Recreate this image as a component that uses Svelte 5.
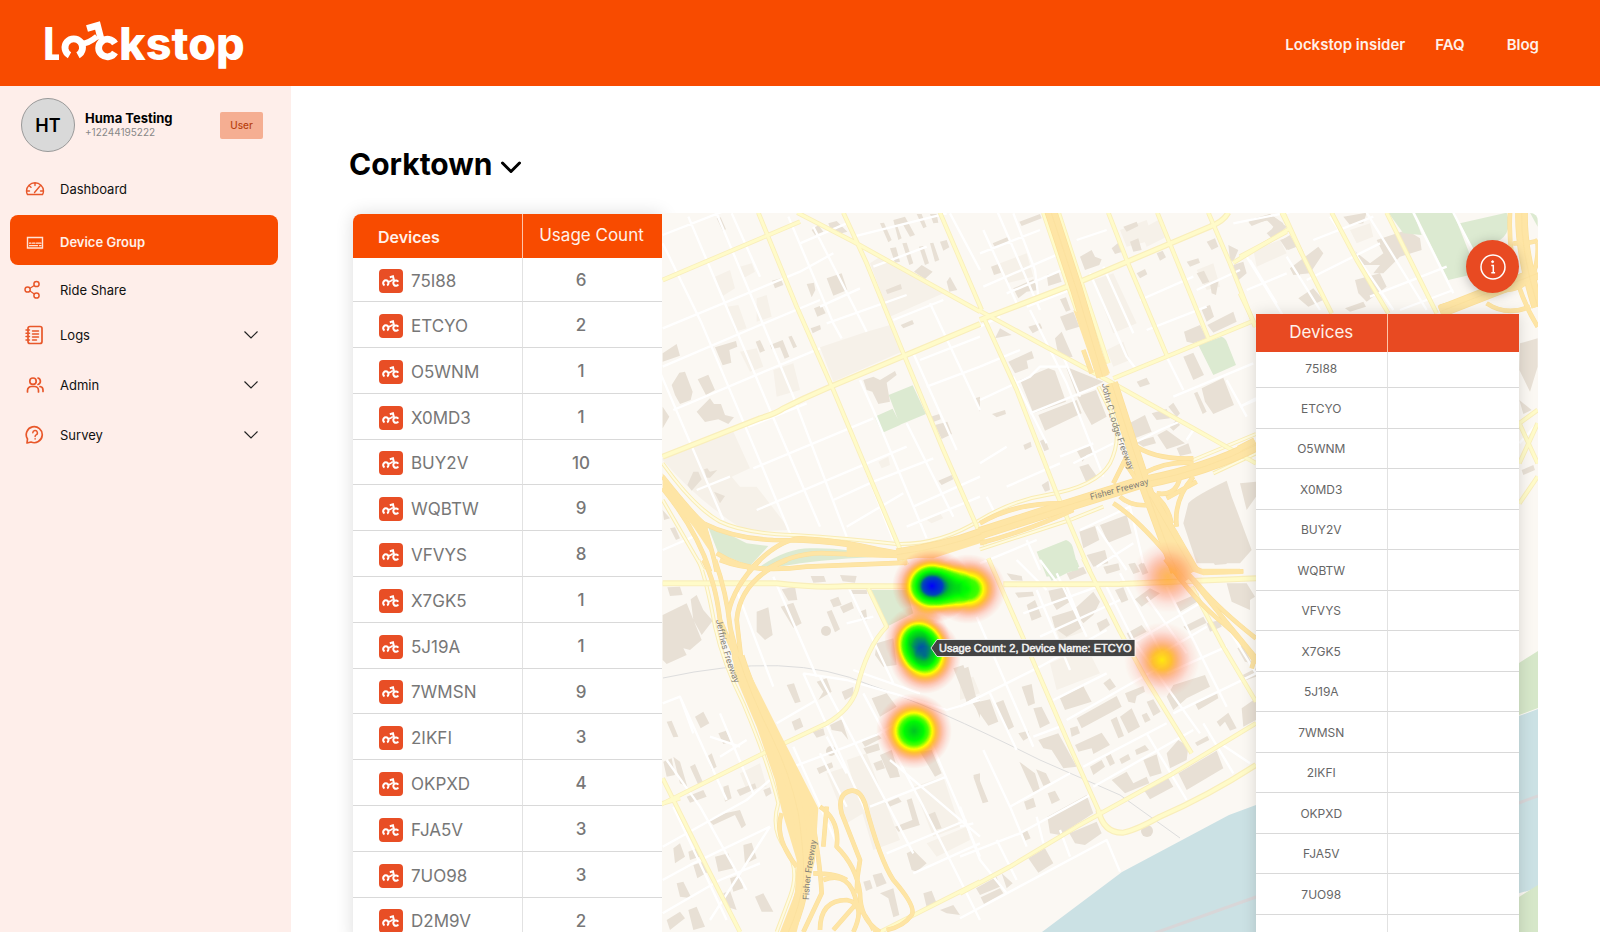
<script>
  const devices = [
    ['75I88', 6], ['ETCYO', 2], ['O5WNM', 1], ['X0MD3', 1], ['BUY2V', 10],
    ['WQBTW', 9], ['VFVYS', 8], ['X7GK5', 1], ['5J19A', 1], ['7WMSN', 9],
    ['2IKFI', 3], ['OKPXD', 4], ['FJA5V', 3], ['7UO98', 3], ['D2M9V', 2]
  ];
  const panelDevices = devices.slice(0, 14).map((d) => d[0]);

  const menu = [
    { label: 'Dashboard', icon: 'gauge' },
    { label: 'Device Group', icon: 'card', active: true },
    { label: 'Ride Share', icon: 'share', short: true },
    { label: 'Logs', icon: 'book', more: true },
    { label: 'Admin', icon: 'people', more: true },
    { label: 'Survey', icon: 'question', more: true }
  ];

  // Map tiles: each holds its own origin and is drawn at one third scale.
  const tiles = [
    {
      x: 660, y: 210,
      zone: 'M630 160L660 140L850 250L690 320ZM480 412L620 365L690 345L725 425L520 515ZM8 745L220 665L270 775L215 800L240 830L290 830L390 960L260 965Q120 880 8 750ZM165 200L210 180L225 235L185 260ZM200 290L235 285L260 355L225 365ZM290 265L320 255L335 320L290 335ZM240 170L275 160L285 185L250 205ZM240 425L290 415L310 470L270 485ZM340 480L400 460L420 540L350 560ZM800 930L840 910L850 925L815 940ZM655 755L685 740L690 765L665 775Z',
      green: 'M140 940L260 1000L325 1008L270 1068L175 1030ZM300 1070Q380 1015 450 1015Q560 1012 650 1040Q460 1050 370 1068ZM686 555L758 526L798 612L720 644ZM644 620L698 596L722 644L666 669Z',
      build: 'M170 25L182 22L198 58L188 62ZM455 60L475 45L490 65L465 75ZM505 40L530 33L562 65L545 70L510 55ZM500 205L545 190L562 240L520 257ZM440 222L462 218L466 240L455 262ZM336 212L362 205L370 225L345 235ZM462 295L485 286L497 310L472 320ZM452 355L480 345L483 358L458 370ZM677 240L722 222L726 237L682 252ZM722 345L757 330L762 342L730 355ZM165 412L228 393L232 410L208 420L214 458L188 466ZM287 395L300 390L315 422L300 428ZM330 405L368 390L388 440L374 446L360 412L335 418ZM385 380L395 377L411 410L400 415ZM8 430L50 402L60 437L8 455ZM35 525L58 488L75 485L98 545L92 570L60 582L45 555ZM113 508L145 494L165 540L138 555ZM110 605L150 565L162 582L183 582L195 615L222 622L205 642L175 628L135 636ZM610 510L640 500L660 510L705 483L710 495L680 518L690 575L655 582L637 545L620 540ZM660 40L672 38L695 90L685 97ZM700 30L735 20L765 75L750 80L728 42L712 48L725 85L715 90ZM770 12L785 12L800 50L790 55ZM810 12L830 12L835 38L820 40ZM690 115L708 112L720 155L705 158ZM727 100L740 98L760 160L748 165ZM777 110L790 108L807 160L795 165ZM810 100L820 98L838 150L825 155ZM840 95L860 90L868 112L850 122ZM762 185L785 165L818 185L795 207ZM860 215L870 200L892 240L868 245ZM825 645L862 635L876 672L845 687ZM812 620L838 612L842 628L820 636ZM835 812L875 795L880 808L845 825ZM945 565L960 560L960 605ZM82 825L100 785L115 785L125 808L95 842ZM132 778L142 775L150 785L172 780L150 803L140 803ZM162 845L195 858L180 880ZM30 955L45 952L60 985L48 990ZM8 900L30 925L12 930ZM8 590L28 620L8 655Z',
      minor: 'M-20 440L190 930M8 100L125 340L290 730L390 970M85 20L330 600L480 950M170 10L400 560L560 980M215 10L300 200M385 20L520 340L545 385M460 50L620 365M600 510L640 600L800 985M530 560L700 990M740 640L880 920M810 280L960 600M760 430L890 720M870 10L960 180M8 75L200 0M8 355L420 185L520 130M8 470L300 345L480 270M40 600L300 490L480 415M265 650L440 580M280 775L640 625M290 900L740 710M110 840L210 800M420 100L560 40M480 290L600 235M500 340L740 255M700 330L850 270M520 870L640 815L820 745M560 950L730 850M740 950L960 860M760 890L960 800M780 450L960 380M800 530L960 470M8 1020L100 980M580 80L860 10M640 170L800 110',
      major: 'M8 210L420 35M412 8L580 95L960 305M295 8L410 290L520 540L740 1065M550 8L620 160L730 430L850 720L975 1005M840 8L965 300',
      avenue: 'M8 740L300 625Q350 610 370 595Q430 565 500 535L960 342',
      edge: 'M8 760Q100 890 180 935Q250 970 400 975Q560 985 710 1002Q840 1005 960 930M8 870Q60 960 130 1080',
      hwy: 'M8 800Q100 915 130 940Q220 985 340 990Q520 990 720 1030M130 940Q160 1030 170 1085M8 835Q110 960 150 1085M170 1030Q240 1075 330 1078M265 1085Q350 990 420 985Q560 990 720 1035M310 1085Q400 1025 500 1030L720 1038',
      wide: 'M710 1034Q850 1015 965 972',
      mass: 'M8 790L70 880L140 940L160 1040L100 950L8 840ZM560 1005L720 1025L860 1005L960 960L960 1000L820 1045L560 1040Z'
    },
    {
      x: 980, y: 210,
      zone: 'M60 160L140 130L160 200L80 220ZM420 60L500 30L520 90L440 110ZM340 210L400 190L470 340L400 370ZM650 180L700 160L720 230L680 240ZM820 120L900 90L920 130L830 170ZM380 420L430 395L450 450L400 470ZM480 60L535 30L560 80L500 110Z',
      green: 'M655 405L725 380Q738 385 742 400L768 465L700 495ZM170 1025L258 990Q272 995 278 1010L296 1080L200 1100Z',
      build: 'M38 100L85 80L90 92L45 112ZM33 170L55 162L63 188L42 195ZM118 35L180 12L185 25L125 48ZM100 235L160 208L175 240L140 245L115 265ZM200 195L235 185L245 215L205 228ZM240 268L258 262L272 300L258 305ZM145 350L180 340L187 355L158 370ZM240 320L280 305L298 350L258 362ZM45 385L60 355L95 375ZM85 455L155 423L162 445L140 452L145 475L105 490ZM120 510L205 475L225 482L258 575L160 610ZM175 615L290 570L305 610L195 662ZM225 385L245 365L278 440L262 443L232 420ZM258 470L370 515L290 555ZM292 560L348 540L380 620L335 645L310 600ZM300 140L335 120L345 140L365 148L358 165L315 180ZM395 115L415 98L428 125L405 132ZM430 50L470 35L475 48L440 65ZM450 95L475 85L485 120L460 125ZM470 190L495 177L502 193L480 205ZM530 130L548 122L558 142L540 152ZM620 155L655 145L660 158L630 170ZM650 190L672 182L688 215L668 222ZM690 220L715 215L708 255L695 250ZM663 295L690 285L702 320L680 335ZM612 365L660 345L680 385L640 400L620 395ZM682 345L760 305L770 335L700 368ZM680 95L705 85L715 110L695 120ZM610 440L640 428L672 495L640 510ZM665 535L730 503L762 585L700 612L675 575ZM642 550L652 545L680 605L668 612ZM470 515L500 503L510 522L480 532ZM448 640L495 615L515 665L465 685ZM515 610L560 597L570 625L530 630ZM532 675L560 660L615 700L560 718ZM565 590L580 578L600 610L590 622ZM568 650L590 630L600 645L580 662ZM590 715L625 700L635 730L600 738ZM467 695L520 680L528 700L490 710ZM288 718L332 705L340 730L320 735L308 755ZM298 770L325 762L350 798L318 815ZM36 612L75 600L78 612L50 622ZM130 705L152 695L155 710L135 720ZM180 693L195 686L207 718L193 724ZM185 825L205 812L210 840L195 845ZM625 880Q640 860 740 812L755 860L815 1020L780 1060L650 1060L610 940ZM298 965L345 948L358 990L310 1015ZM360 945L440 915L455 970L385 998ZM320 1035L375 1020L385 1060L340 1070ZM805 30L870 12L920 50L880 90L860 70L885 50L870 30L810 42ZM745 105L775 120L760 155L750 150ZM760 165L790 155L800 190L770 215ZM900 90L930 80L940 110L920 120ZM930 175L960 160L960 200L940 190Z',
      minor: 'M10 60L110 280M50 0L180 300M100 10L165 180L175 260M330 190L440 440L470 480M370 170L460 370M150 300L260 520L370 800M100 500L200 700M250 440L300 560M60 320L0 350M0 570L150 500L180 470L260 470M150 610L350 530M0 760L80 710M80 830L240 760M280 760L400 700M80 250L270 170M290 90L380 60M560 440L610 540M470 480L540 450M580 560L820 460M650 240L780 180M480 270L640 200M500 360L680 290M740 510L800 620M780 590L828 570M460 700L540 660L610 630M620 690L640 660M800 140L960 400M0 130L180 60M10 230L240 130M350 950L440 1080M140 990L180 1080M300 960L450 890L490 1060M0 1060L170 990M350 1070L460 1000M20 860L50 920M240 740L340 700M760 40L960 0M140 290L270 240M0 470L120 420',
      major: 'M190 8L260 215L360 500M236 8L300 205L385 460M385 8L440 150L562 440M532 8L685 385M685 8L750 160L825 350M760 158L925 58M905 8L965 130M-5 300L390 515L828 760M10 320L110 540L230 850L330 1085M400 505L560 440L815 335',
      avenue: 'M0 330L300 215L690 50Q730 35 745 8',
      edge: 'M0 930Q100 870 200 855Q350 830 390 760Q425 690 400 620L355 530M640 750L828 672M0 1018L270 930L370 890M700 790L828 730',
      hwy: 'M455 700Q520 750 640 745M400 530L460 690M490 790Q570 750 640 760M530 850Q590 860 600 800M500 840Q560 870 575 940M640 800Q580 870 590 950M400 880Q480 930 600 1080M400 820L440 740M430 750L470 810M0 940Q100 880 240 880M0 1000Q150 960 280 900M420 860Q450 890 510 885M310 420L335 490M560 865L650 815',
      wide: 'M211 0L290 240L368 500M0 970L250 890L500 812M395 520L460 720L500 840L590 1085M500 815Q680 780 828 705M510 860L640 1085',
      mass: 'M540 930L590 960L655 1085L570 1085ZM280 300L330 330L390 490L350 500Z'
    },
    {
      x: 1240, y: 210,
      zone: 'M330 60L390 40L400 80L350 100Z',
      green: 'M445 8L520 8L545 75L490 70ZM525 8L640 8L712 190L625 210ZM660 40L800 8Q820 60 780 90L700 120ZM870 8L893 8L893 50Z',
      build: 'M25 35L90 12L130 40L110 80L85 75L100 50L80 30L35 48ZM125 90L150 75L170 110L145 120ZM150 175L235 110L250 130L210 190L160 195ZM310 20L380 8L370 40L330 45ZM340 120L390 160L430 130L410 90L500 60L540 85L545 120L480 140L430 190L400 190L420 165L360 165ZM345 210L420 190L440 230L380 275L355 250ZM315 295L370 275L378 290L330 305ZM175 265L220 235L250 270L205 290ZM840 400L893 385L893 470L870 545L838 480ZM838 570L875 600L850 612ZM845 780L880 765L885 780L850 795ZM0 820L48 815L48 860L20 900Z',
      minor: 'M140 140L240 300M30 150L110 280M270 20L460 300M380 8L560 300M520 8L640 250M640 8L740 200M20 240L140 190M200 210L420 100M390 260L620 170M220 90L400 20M480 300L640 240M838 700L893 640M0 590L48 565',
      major: 'M130 8L185 130L275 310M275 8L350 150L445 310M440 8L590 310M0 140L140 65M0 250L48 350M838 640L893 600M838 760L893 640M838 640L893 760M838 880L893 800',
      avenue: '', edge: '',
      hwy: 'M810 8Q800 200 893 350M820 100Q880 100 893 90M600 290Q700 260 800 240Q900 230 893 100M740 280Q800 320 870 290',
      wide: 'M845 0Q840 120 893 290M600 305Q740 250 893 190M0 725L48 700',
      mass: ''
    },
    {
      x: 660, y: 560,
      zone: 'M560 600L620 580L720 840L640 870ZM760 680L850 650L900 800L820 830ZM800 850L920 800L930 840L830 890ZM240 640L300 610L320 680L260 690ZM500 640L560 620L610 760L560 790Z',
      green: 'M630 90L740 90L760 160L680 200Z',
      build: 'M22 82L60 80L68 105L30 108ZM92 118L110 105L130 150L158 182L125 225L100 180ZM8 165L80 130L125 240L90 270L70 265L80 285L20 312L8 300ZM290 155L325 142L338 225L315 240L290 215ZM365 88L405 80L412 120L385 122ZM362 140L400 128L425 190L400 203ZM452 48L492 48L498 65L460 68ZM540 45L590 48L585 68L548 64ZM500 155L515 150L540 208L525 217ZM570 90L620 90L622 102L572 102ZM510 120L535 110L545 135L520 142ZM540 140L575 125L582 145L550 160ZM598 155L618 148L622 180L605 182ZM380 375L402 370L422 425L405 430ZM105 470L130 455L148 490L122 505ZM470 365L500 355L515 395L475 420L490 395ZM395 485L420 473L430 500L405 512ZM175 520L198 512L212 545L190 552ZM510 495L545 478L565 540L545 515L515 510ZM545 395L580 380L580 405L555 420ZM635 415L680 400L710 440L660 470ZM650 250L700 235L710 315L670 320L645 285ZM605 545L650 520L665 535L615 560ZM610 565L655 550L660 570L620 582ZM660 585L695 570L720 650L690 655ZM470 625L515 607L520 622L478 642ZM458 515L490 505L495 525L470 533ZM20 485L35 482L55 530L40 532ZM10 605L35 595L45 645L20 650ZM40 590L60 605L82 680L60 670ZM90 620L105 612L130 670L115 675ZM140 590L155 580L170 620L155 630ZM190 680L205 675L215 715L195 725ZM230 690L285 670L290 685L240 708ZM310 690L330 682L335 700L318 710ZM80 710L130 690L140 710L90 728ZM145 780L195 760L240 750L258 795L245 805L225 765L160 795ZM40 865L60 850L75 890L45 910ZM85 875L110 865L118 890L90 900ZM100 915L130 905L145 935L112 955ZM165 890L205 880L220 925L175 935ZM210 955L240 945L250 985L220 995ZM250 855L275 848L290 895L255 912ZM50 970L70 965L95 1015L60 1010ZM190 1000L210 992L230 1050L200 1040ZM285 1010L310 1000L340 1055L305 1055ZM85 1050L110 1040L135 1100L100 1110ZM20 1080L60 1055L75 1075L30 1110ZM675 730L715 712L725 725L685 742ZM740 720L755 715L778 790L760 790ZM705 800L770 775L780 795L715 815ZM802 765L825 755L845 805L825 810ZM740 880L760 870L800 910L770 935L755 930ZM610 965L630 960L638 985L618 993ZM638 945L665 938L680 970L650 982ZM660 1000L700 985L718 1065L700 1072L685 1015ZM790 1000L815 992L830 1030L800 1042ZM840 1050L880 1035L900 1065L860 1060ZM880 325L910 315L945 410L920 425ZM940 425L960 415L960 475ZM780 575L815 570L845 640L825 650ZM640 610L665 600L675 625L650 632ZM940 645L960 640L960 700Z',
      minor: 'M230 90L340 380M340 50L470 350M430 340L620 760M560 70L700 370M480 350L760 880M610 400L790 740L960 1080M8 430L60 410L200 720M180 460L280 700M60 410L100 520M350 490L470 420M8 960L100 910L330 800M8 860L260 720L330 660M20 600L120 740L260 990M40 740L200 1080M8 1060L180 960L300 910M430 340L560 360L700 400L860 450M580 330L780 400M560 190L640 170M400 620L560 560L660 520L760 460M480 580L560 740M500 530L560 640M630 740L860 650M680 880L920 780M760 940L960 850M690 600L960 830M860 450L960 420M150 530L240 560M180 590L260 540M330 800L150 1080M400 560L530 850M780 470L960 890',
      major: 'M-10 740L320 575L500 490Q570 450 590 390Q620 260 680 200L625 85M8 655L140 920L240 1116M-10 735L60 715M660 1116L960 965',
      avenue: 'M8 70L350 70Q480 85 560 78L960 80',
      edge: 'M115 0Q140 60 165 200Q190 310 250 430Q330 620 355 730Q330 810 380 870Q420 930 390 1010L350 1116',
      hwy: 'M130 0Q165 60 180 180L240 320M165 0Q200 100 210 200L240 320M300 0Q220 80 205 160L225 300M380 0Q240 60 230 180L245 310M180 0Q280 40 440 20L740 8M450 740Q480 900 485 1000L430 1116M480 740Q540 780 530 860Q590 920 600 1000Q600 1080 660 1116M365 760Q340 830 410 920M490 960Q570 930 590 1030Q650 1116 640 1116M480 1110Q480 1020 560 1020Q620 1030 580 1116M590 1000Q590 950 600 900L545 760Q530 700 575 692Q600 690 615 730Q660 900 700 960Q770 1040 755 1065Q730 1100 680 1110M460 940Q530 940 560 960M500 740L490 860M520 1110L590 1030',
      wide: 'M235 290Q270 400 335 530Q390 640 415 760Q435 900 430 960Q420 1040 385 1116',
      mass: 'M218 250L250 300L360 520L475 745L465 900L440 1000L410 1116L360 1116L405 1000L410 900L365 750L345 660L290 500L222 340Z'
    },
    {
      x: 960, y: 560,
      zone: 'M270 310L380 260L420 340L290 390ZM280 190L350 165L370 215L300 240ZM0 360L40 350L60 400L0 420Z',
      green: 'M240 0L350 0L358 20L275 62Z',
      build: 'M165 98L218 95L222 108L175 113ZM200 135L225 120L245 170L215 182ZM265 92L315 82L330 125L290 150L275 125ZM340 150L400 95L420 125L400 165L370 190ZM275 170L340 150L370 200L320 230L285 205ZM465 90L490 82L505 120L485 128ZM525 118L570 85L600 100L545 140ZM500 220L545 195L560 215L510 240ZM410 190L440 175L450 195L420 215ZM645 130L715 100L720 120L660 155ZM670 200L730 170L740 188L685 215ZM740 190L780 180L785 200L750 215ZM800 70L860 70L885 110L870 120L870 150L815 125ZM832 265L850 255L875 310L855 305ZM848 345L888 325L888 350L860 360ZM705 430L770 395L775 415L715 450ZM640 375L735 345L750 380L680 415L640 450L620 410ZM770 485L805 458L830 505L810 512L795 485L780 500ZM845 445L888 415L888 480L850 500ZM300 415L370 378L395 425L315 450ZM350 475L470 408L485 440L365 505ZM430 370L450 355L468 380L448 392ZM495 400L550 378L555 395L530 408L525 430L505 425ZM560 425L580 418L602 455L580 468ZM480 470L515 445L540 500L505 520ZM452 480L470 470L492 528L475 535ZM345 555L425 518L450 555L400 582L395 565L355 575ZM330 505L352 498L360 520L335 530ZM185 380L215 372L225 430L205 438ZM220 445L245 440L270 490L240 505ZM235 540L295 520L350 620L310 625L275 570L250 565ZM105 430L130 420L162 500L140 512ZM38 430L90 418L115 485L85 497ZM175 520L205 512L210 530L190 542ZM0 330L25 320L48 410L20 425ZM525 570L555 555L567 570L530 585ZM545 465L560 458L572 480L555 488ZM390 620L425 600L435 620L400 645ZM437 590L452 582L465 610L450 618ZM478 597L505 582L512 598L485 612ZM620 580L655 540L685 560L680 600L630 625ZM550 600L590 583L605 640L570 650ZM705 548L742 528L748 540L712 558ZM455 660L500 635L520 670L560 650L568 670L495 700ZM553 692L625 655L640 680L570 718ZM655 640L770 572L790 625L680 690ZM178 605L225 640L240 690L220 697L200 655ZM228 628L258 640L272 668L250 678ZM263 700L285 692L300 720L275 732ZM192 725L220 713L228 740L200 750ZM40 650L52 643L85 725L68 730ZM262 770L380 705L400 760L300 825L270 820ZM328 820L410 785L425 820L375 855L345 850ZM185 815L200 808L212 835L195 842ZM205 895L255 865L280 910L235 938ZM62 1012L120 985L130 1000L72 1032ZM48 985L110 950L120 980L60 1005ZM125 940L158 970L140 985ZM140 40L185 48L188 62L155 60ZM320 40L370 20L380 40L330 60ZM430 20L475 10L480 30L440 42ZM505 12L525 8L540 35L520 42ZM535 15L550 5L565 38L548 45ZM755 0L800 0L800 12L765 15Z',
      minor: 'M230 90L330 330M290 40L380 230M190 160L440 70M240 230L480 120M0 440L240 320L440 210M50 170L220 560M90 400L170 570M320 80L360 180M560 110L680 280M620 80L800 440M440 80L520 240L720 520M480 40L620 310M500 260L720 130M570 300L740 200M620 340L800 260M280 420L440 340M320 480L620 310M220 530L300 500M370 620L620 490M400 680L700 510M560 520L680 720M730 490L820 640M640 460L888 340M150 740L330 640M70 570L150 740L200 860M0 890L180 820L400 700M0 1075L440 840L480 935M0 740L60 900L140 1000M110 840L170 960M230 770L250 850M300 810L330 890M780 550L870 610M170 0L260 90M740 100L888 340M0 800L40 790M240 0L300 80',
      major: 'M85 -5L190 235L330 560L415 750M370 -5L480 215L560 360L695 580M695 80L790 260L888 425M0 1000L150 920L350 800L640 640L888 490',
      avenue: 'M130 73L480 72L888 55M415 750Q430 820 490 818Q530 810 600 770Q740 710 888 615',
      edge: '',
      hwy: 'M620 0Q700 120 790 190Q840 230 888 310M645 0L720 80Q780 150 888 235M690 50Q760 140 885 290L875 325M690 0Q710 45 760 36L850 34',
      wide: 'M625 -10L680 60',
      mass: 'M700 35L720 26L840 26L845 42L730 46Z'
    }
  ];

  const water = 'M1042 932L1122 872L1229 815L1256 805L1290 795L1519 716L1538 709L1538 888L1380 932Z';
  const banks = 'M1519 663L1538 651L1538 708L1519 715ZM1519 897L1538 885L1538 932L1519 932Z';
  const rail = 'M663 678Q790 650 870 685Q930 705 1040 760L1120 795L1180 838';

  const heat = [
    { id: 'hot', x: 932, y: 586, rx: 40, ry: 37 },
    { id: 'side', x: 968, y: 589, rx: 38, ry: 35 },
    { id: 'side', x: 917, y: 639, rx: 33, ry: 33 },
    { id: 'warm', x: 925, y: 656, rx: 36, ry: 38 },
    { id: 'warm', x: 914, y: 731, rx: 38, ry: 38 },
    { id: 'mild', x: 1162, y: 660, rx: 38, ry: 38 },
    { id: 'faint', x: 1168, y: 577, rx: 36, ry: 36 }
  ];
</script>

{#snippet bike()}
  <g fill="none" stroke="currentColor" stroke-width="6.8">
    <path d="M8.500 22.300A8.800 8.800 0 1 1 17 22.300" />
    <path d="M54 19.500A8.800 8.800 0 1 1 54 10.500" />
    <path d="M20 10.500Q27 11 36 3.500" stroke-width="6" />
    <path d="M26 -4.500L36.500 -7.500L40 6" />
  </g>
{/snippet}

<div class="page">
  <header>
    <a class="logo" href="#home" aria-label="Lockstop">
      <svg width="204" height="52" viewBox="42 20 204 52">
        <clipPath id="stem"><rect x="40" y="20" width="18" height="45" /></clipPath>
        <text x="41" y="60" class="mark-l" clip-path="url(#stem)">L</text>
        <g transform="translate(60 33)" color="#fff">{@render bike()}</g>
        <text x="118" y="60" class="mark">kstop</text>
      </svg>
    </a>
    <nav class="top">
      <a href="#insider">Lockstop insider</a>
      <a href="#faq">FAQ</a>
      <a href="#blog">Blog</a>
    </nav>
  </header>

  <div class="body">
    <aside>
      <div class="profile">
        <div class="avatar">HT</div>
        <div class="who">
          <strong>Huma Testing</strong>
          <span>+12244195222</span>
        </div>
        <span class="role">User</span>
      </div>
      <nav class="menu">
        {#each menu as item}
          <a href="#{item.icon}" class:active={item.active} class:short={item.short}>
            <svg class="ico" width="20" height="20" viewBox="0 0 20 20" fill="none" stroke="currentColor" stroke-width="1.5" stroke-linecap="round" stroke-linejoin="round">
              {#if item.icon === 'gauge'}
                <path d="M2.500 15.500Q1.500 14 1.500 12A8.500 8.200 0 0 1 18.500 12Q18.500 14 17.500 15.500ZM10 4v2.500M4.500 7l1.500 1.200M2 12h2.500M15.500 12h2.500M15 7L9.500 13.500" stroke-width="1.400" />
              {:else if item.icon === 'card'}
                <path d="M2.500 5.500h15v10.500h-15z" stroke-width="1.400" stroke-linejoin="miter" />
                <path d="M4.500 13.700h8M14.500 13.700h1.500M4.500 11.200h1.500M7.500 11.200h2.500M11.500 11.200h4.500" stroke-width="1.200" />
              {:else if item.icon === 'share'}
                <circle cx="3.600" cy="9.500" r="2.600" /><circle cx="12.500" cy="4" r="2.600" /><circle cx="12.500" cy="15.500" r="2.600" />
                <path d="M6 8.200L10.300 5.400M6 10.900L10.300 14" stroke-width="1.200" />
              {:else if item.icon === 'book'}
                <rect x="3" y="1.500" width="14" height="17" rx="2" stroke-width="1.700" />
                <path d="M7.500 6h6M7.500 9h6M7.500 12h6M7.500 15h4M1 5h3.500M1 8.300h3.500M1 11.600h3.500M1 15h3.500" />
              {:else if item.icon === 'people'}
                <g stroke-width="1.700">
                  <circle cx="8" cy="6.200" r="3.200" />
                  <path d="M2.500 17v-1.500a4 4 0 0 1 4-4h3a4 4 0 0 1 4 4V17M13 3a3.400 3.400 0 0 1 0 6.500M15 11.500a3.500 3.500 0 0 1 3 3.500v1.500" />
                </g>
              {:else}
                <path d="M2 18l.5-4A8 8 0 1 1 6 17Z" stroke-width="1.700" />
                <path d="M7.800 7.800a2.300 2.300 0 1 1 3.300 2.100q-1 .5-1 1.600M10.100 13.800v.1" />
              {/if}
            </svg>
            <span>{item.label}</span>
            {#if item.more}
              <svg class="more" width="14" height="8" viewBox="0 0 14 8" fill="none" stroke="#222" stroke-width="1.200"><path d="M.5.500L7 7L13.500.500" /></svg>
            {/if}
          </a>
        {/each}
      </nav>
    </aside>

    <main>
      <button class="place">
        Corktown
        <svg width="22" height="14" viewBox="0 0 22 14" fill="none" stroke="#000" stroke-width="3" stroke-linecap="round" stroke-linejoin="round"><path d="M2.500 3L11 11.500L19.500 3" /></svg>
      </button>

      <div class="board">
        <table class="usage">
          <thead>
            <tr><th class="dev">Devices</th><th class="count">Usage Count</th></tr>
          </thead>
          <tbody>
            {#each devices as [name, count]}
              <tr>
                <td>
                  <div class="device">
                    <span class="tag"><svg width="18" height="12" viewBox="0 -12 60 40">{@render bike()}</svg></span>
                    {name}
                  </div>
                </td>
                <td class="num">{count}</td>
              </tr>
            {/each}
          </tbody>
        </table>

        <div class="map">
          <svg class="canvas" viewBox="662 213 876 719" preserveAspectRatio="xMinYMin slice">
            <defs>
              <filter id="heatmap" x="660" y="480" width="620" height="360" filterUnits="userSpaceOnUse" color-interpolation-filters="sRGB">
                <feColorMatrix values="0 0 0 1 0  0 0 0 1 0  0 0 0 1 0  0 0 0 1 0" />
                <feComponentTransfer>
                  <feFuncR type="table" tableValues="1 1 1 1 1 1 0.3 0 0 0 0" />
                  <feFuncG type="table" tableValues="0.3 0.3 0.35 0.5 0.7 1 1 1 0.75 0.25 0" />
                  <feFuncB type="table" tableValues="0.2 0.2 0.15 0.08 0 0 0 0 0.15 0.75 1" />
                  <feFuncA type="table" tableValues="0 0.13 0.32 0.55 0.8 1 1 1 1 1 1" />
                </feComponentTransfer>
              </filter>
              {#each [['hot', 1, 0.88, 0.58, 0.2], ['warm', 0.79, 0.71, 0.48, 0.18], ['side', 0.68, 0.62, 0.42, 0.15], ['mild', 0.47, 0.4, 0.24, 0.08], ['faint', 0.35, 0.3, 0.2, 0.07]] as [id, a, b, c, d]}
                <radialGradient {id}>
                  <stop offset="0" stop-opacity={a} />
                  <stop offset="0.25" stop-opacity={b} />
                  <stop offset="0.5" stop-opacity={c} />
                  <stop offset="0.78" stop-opacity={d} />
                  <stop offset="1" stop-opacity="0" />
                </radialGradient>
              {/each}
              <path id="lodge" d="M1102 384Q1108 420 1132 478" />
              <path id="fisher" d="M1091 500L1161 481" />
              <path id="jeffries" d="M716 620Q722 655 737 690" />
              <path id="fisher-south" d="M809 900Q810 870 818 835" />
            </defs>

            <rect x="660" y="210" width="900" height="730" fill="#fbf8f3" />
            {#each ['zone', 'build', 'green'] as layer}
              {#each tiles as t}
                <path class={layer} d={t[layer]} transform="translate({t.x} {t.y}) scale(.33333)" />
              {/each}
            {/each}
            <path d={water} fill="#cbe1e4" />
            <path d={banks} fill="#d6e7c9" />
            <path d="M1155 933L1256 897L1538 796" class="border" />
            <path d={rail} class="rail" />
            <circle cx="1147" cy="831" r="6" fill="#e5ddd2" />
            <circle cx="826" cy="631" r="5" fill="#e5ddd2" />
            <circle cx="831" cy="751" r="5" fill="#e5ddd2" />
            {#each ['minor', 'edge case', 'edge', 'major case', 'avenue case', 'major', 'avenue', 'hwy case', 'wide case', 'mass', 'hwy', 'wide', 'lane'] as layer}
              {#each tiles as t}
                <path class="line {layer}" d={t[layer === 'lane' ? 'wide' : layer.split(' ')[0]]} transform="translate({t.x} {t.y}) scale(.33333)" />
              {/each}
            {/each}

            <g class="road">
              <text><textPath href="#lodge">John C Lodge Freeway</textPath></text>
              <text><textPath href="#fisher">Fisher Freeway</textPath></text>
              <text><textPath href="#jeffries">Jeffries Freeway</textPath></text>
              <text><textPath href="#fisher-south">Fisher Freeway</textPath></text>
            </g>

            <g filter="url(#heatmap)">
              {#each heat as h}
                <ellipse cx={h.x} cy={h.y} rx={h.rx} ry={h.ry} fill="url(#{h.id})" />
              {/each}
            </g>

            <path d="M931 648L937 639.500H1135V656.500H937Z" fill="#444" stroke="#fff" stroke-width=".8" />
            <text x="939" y="652" class="tip">Usage Count: 2, Device Name: ETCYO</text>
          </svg>

          <button class="info" aria-label="Information">
            <svg width="28" height="28" viewBox="0 0 28 28" fill="none" stroke="#fff" stroke-width="1.500">
              <circle cx="14" cy="14" r="12" />
              <path d="M12.300 12.500h2v7.200M12.300 19.700h3.800" />
              <circle cx="13.600" cy="8.700" r="1" fill="#fff" stroke-width="1" />
            </svg>
          </button>

          <table class="panel">
            <thead><tr><th>Devices</th><th></th></tr></thead>
            <tbody>
              {#each panelDevices as name}
                <tr><td>{name}</td><td></td></tr>
              {/each}
              <tr><td></td><td></td></tr>
            </tbody>
          </table>
        </div>
      </div>
    </main>
  </div>
</div>

<style>
  .page {
    height: 100vh;
    display: flex;
    flex-direction: column;
    overflow: hidden;
    background: #fff;
    color: #111;
    font-family: Inter, sans-serif;
  }
  a { color: inherit; text-decoration: none; }
  button { font: inherit; border: 0; cursor: pointer; }

  header {
    flex: none;
    height: 86px;
    display: flex;
    align-items: center;
    justify-content: space-between;
    padding: 0 61px 0 43px;
    box-sizing: border-box;
    background: #f84b00;
    color: #fff;
  }
  .logo svg { display: block; margin-top: 6px; overflow: visible; }
  .mark { font: 800 45px Inter, sans-serif; fill: #fff; }
  .mark-l { font: 900 45px Lato, sans-serif; fill: #fff; }
  .top { display: flex; gap: 30px; margin-top: 3px; font-size: 15px; font-weight: 600; }
  .top a:last-child { margin-left: 12px; }
  .top a { color: #fff1ea; }

  .body { flex: 1; min-height: 0; display: flex; }

  aside { flex: none; width: 291px; background: #feeeea; }
  .profile {
    display: flex;
    align-items: center;
    padding: 12px 28px 12px 21px;
  }
  .avatar {
    width: 54px;
    height: 54px;
    box-sizing: border-box;
    border: 1px solid #999;
    border-radius: 50%;
    background: #d9d9d9;
    display: grid;
    place-items: center;
    font-size: 18px;
    font-weight: 600;
    color: #000;
  }
  .who { flex: 1; margin-left: 10px; padding-bottom: 2px; display: flex; flex-direction: column; }
  .who strong { font-size: 13px; line-height: 15px; color: #000; }
  .who span { font-size: 10px; line-height: 12px; color: #888; }
  .role {
    width: 43px;
    line-height: 27px;
    border-radius: 2px;
    background: #f5ae92;
    color: #b8420f;
    font-size: 10px;
    font-weight: 500;
    text-align: center;
  }
  .menu { padding: 0 13px 0 10px; }
  .menu a {
    height: 50px;
    box-sizing: border-box;
    display: flex;
    align-items: center;
    gap: 15px;
    padding: 0 20px 0 15px;
    font-size: 13px;
    border-radius: 8px;
  }
  .menu a.short { height: 45px; padding-top: 4px; padding-left: 14px; gap: 16px; }
  .menu a.active { margin-top: 1px; padding-top: 4px; background: #f84b00; color: #fff1ea; font-weight: 600; }
  .menu span { flex: 1; }
  .ico { color: #e8572a; }
  .active .ico { color: #ffe3d6; }

  main { flex: 1; min-width: 0; display: flex; flex-direction: column; padding: 60px 62px 0; }
  .place {
    align-self: flex-start;
    display: flex;
    align-items: center;
    gap: 7px;
    padding: 0;
    margin-left: -4px;
    background: none;
    color: #000;
    font-size: 30px;
    font-weight: 700;
    line-height: 36px;
  }
  .place svg { margin-top: 5px; }
  .board { flex: 1; min-height: 0; display: flex; align-items: flex-start; margin-top: 31px; }

  table { border-collapse: separate; border-spacing: 0; table-layout: fixed; }
  th, td { padding: 0; box-sizing: border-box; }
  tbody td { border-bottom: 1px solid #d9d9d9; }
  td:first-child { border-right: 1px solid #e2e2e2; }
  th:first-child { border-right: 1px solid #ffc4a8; }

  .usage {
    flex: none;
    width: 309px;
    margin-top: 1px;
    background: #fff;
    border-radius: 8px 0 0 0;
    box-shadow: 0 0 18px rgba(0, 0, 0, 0.14);
    color: #777;
    font-size: 17px;
  }
  .usage th { height: 44px; background: #f84b00; color: #fff1ea; font-size: 17px; }
  .usage .dev { width: 170px; padding: 2px 0 0 25px; text-align: left; font-size: 16px; font-weight: 600; border-radius: 8px 0 0 0; }
  .usage .count { padding: 0 2px 3px 0; text-align: center; font-weight: 400; }
  .usage td { height: 46px; }
  .usage tr:nth-child(5n) td { height: 45px; }
  .usage tbody tr:first-child td { height: 44px; }
  .device { display: flex; align-items: center; gap: 8px; padding: 2px 0 0 26px; font-weight: 400; }
  .usage .num { text-align: center; padding: 1px 23px 0 0; font-weight: 500; }
  .tag {
    width: 24px;
    height: 24px;
    display: grid;
    place-items: center;
    border-radius: 4px;
    background: #e84e25;
    color: #fff;
  }

  .map {
    position: relative;
    flex: 1;
    align-self: stretch;
    min-width: 0;
    overflow: hidden;
    border-radius: 0 8px 0 0;
  }
  .canvas { display: block; width: 100%; height: 100%; }
  .zone { fill: #f6f1e9; }
  .build { fill: #e8e0d5; }
  .green { fill: #dcead1; }
  .line { fill: none; stroke-linejoin: round; }
  .minor { stroke: #fff; stroke-width: 7px; }
  .major { stroke: #fffbc9; stroke-width: 9px; }
  .major.case { stroke: #f9eebb; stroke-width: 14px; }
  .avenue { stroke: #fffbc9; stroke-width: 11px; }
  .avenue.case { stroke: #f9eebb; stroke-width: 18px; }
  .edge { stroke: #fffbe0; stroke-width: 6px; }
  .edge.case { stroke: #f9ecb4; stroke-width: 12px; }
  .hwy { stroke: #fee5a5; stroke-width: 11px; }
  .hwy.case { stroke: #fbdf9b; stroke-width: 14px; }
  .wide { stroke: #fee5a5; stroke-width: 34px; }
  .wide.case { stroke: #fbdf9b; stroke-width: 38px; }
  .line.mass { fill: #fee5a5; }
  .lane { stroke: #fbdf9b; stroke-width: 2px; }
  .rail { fill: none; stroke: #ddd; stroke-width: 1px; }
  .border { fill: none; stroke: #d8d6d8; stroke-width: 3px; }
  .road { font: 400 9px Roboto, sans-serif; fill: #858279; }
  .tip { font: 400 11px "Liberation Sans", sans-serif; fill: #f2f2f2; stroke: #f2f2f2; stroke-width: 0.5px; }

  .info {
    position: absolute;
    top: 27px;
    right: 19px;
    width: 53px;
    height: 53px;
    display: grid;
    place-items: center;
    padding: 0;
    border-radius: 50%;
    background: #e84a22;
    box-shadow: 0 2px 12px rgba(0, 0, 0, 0.25);
  }
  .panel {
    position: absolute;
    top: 101px;
    right: 19px;
    width: 263px;
    background: #fff;
    box-shadow: 0 0 14px rgba(0, 0, 0, 0.14);
    color: #666;
    font-size: 12px;
    text-align: center;
  }
  .panel th { height: 38px; padding-bottom: 2px; background: #e84a22; color: #fff1ea; font-size: 17px; font-weight: 400; }
  .panel td { height: 40px; }
  .panel tr:nth-child(even) td { height: 41px; }
  .panel tbody tr:first-child td { height: 36px; padding-bottom: 2px; }
</style>
